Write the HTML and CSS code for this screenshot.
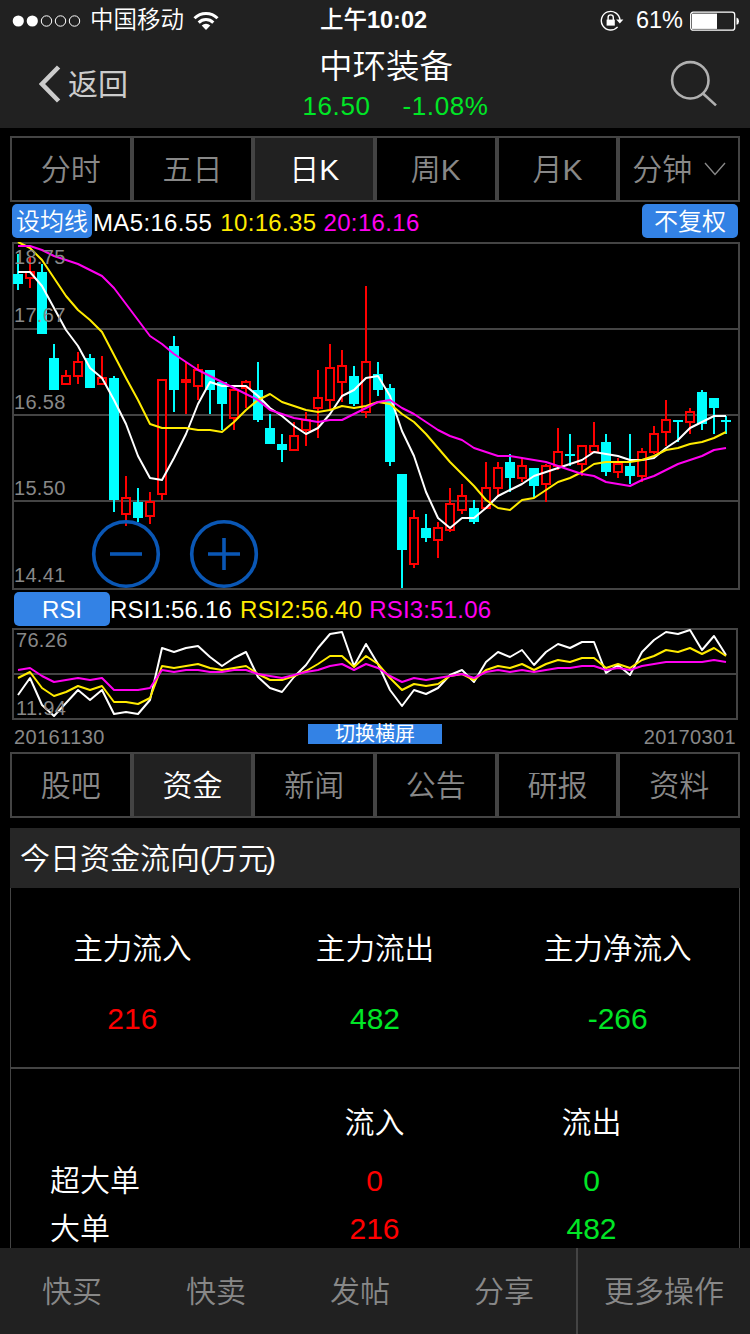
FILE: index.html
```html
<!DOCTYPE html>
<html lang="zh-CN">
<head>
<meta charset="utf-8">
<title>中环装备</title>
<link rel="stylesheet" href="styles.css">
</head>
<body>
<header class="top">
  <div class="status">
    <div class="carrier">
      <svg width="72" height="14" viewBox="0 0 72 14" fill="none" stroke="#fff"><circle cx="6.3" cy="7" r="5.6" fill="#fff" stroke="none"/><circle cx="20.3" cy="7" r="5.6" fill="#fff" stroke="none"/><circle cx="34.5" cy="7" r="5.2"/><circle cx="48.5" cy="7" r="5.2"/><circle cx="62.5" cy="7" r="5.2"/></svg>
      <span class="carrier-name">中国移动</span>
      <svg class="wifi" width="26" height="20" viewBox="0 0 26 20" fill="none" stroke="#fff" stroke-width="3"><path d="M1.5 7.2a16.2 16.2 0 0 1 23 0"/><path d="M5.7 11.6a10.3 10.3 0 0 1 14.6 0"/><path d="M13 19l-4.3-4.4a6.2 6.2 0 0 1 8.6 0z" fill="#fff" stroke="none"/></svg>
    </div>
    <div class="clock">上午<b>10:02</b></div>
    <div class="power">
      <svg width="24" height="22" viewBox="0 0 24 22" fill="none" stroke="#fff" stroke-width="1.4"><path d="M17.6 16.9A9.3 9.3 0 1 1 19.9 10"/><path d="M16.2 9.6h7.2l-3.6 4z" fill="#fff" stroke="none"/><path d="M6.6 9.6h8.2v6H6.6z" fill="#fff" stroke="none"/><path d="M8.1 10V7.5a2.6 2.6 0 0 1 5.2 0V10"/></svg>
      <span class="percent">61%</span>
      <svg width="50" height="20" viewBox="0 0 50 20"><rect x=".7" y="1.2" width="44" height="18" rx="2.5" fill="none" stroke="#fff" stroke-width="1.3"/><rect x="2" y="2.6" width="25" height="15.3" fill="#fff"/><path d="M46.5 6.6q2.5.6 2.5 3.6t-2.5 3.6z" fill="#fff"/></svg>
    </div>
  </div>
  <div class="nav">
    <div class="back">
      <svg width="22" height="38" viewBox="0 0 22 38" fill="none" stroke="#ccc" stroke-width="4.6"><path d="M19.6 2L3 19l16.6 17"/></svg>
      <span>返回</span>
    </div>
    <div class="quote">
      <h1 class="stock">中环装备</h1>
      <div class="price"><span>16.50</span><span>-1.08%</span></div>
    </div>
    <svg class="search" width="48" height="48" viewBox="0 0 48 48" fill="none" stroke="#b0b0b0" stroke-width="2.6"><circle cx="20.3" cy="20.3" r="18.2"/><path d="M33 33.5L46 45.4"/></svg>
  </div>
</header>

<nav class="tabs tabs-period">
  <div class="tab">分时</div><div class="tab">五日</div><div class="tab active">日K</div><div class="tab">周K</div><div class="tab">月K</div>
  <div class="tab">分钟<svg class="caret" width="22" height="14" viewBox="0 0 22 14" fill="none" stroke="#888" stroke-width="1.4"><path d="M1 1l10 11.5L21 1"/></svg></div>
</nav>

<div class="legend legend-ma">
  <span class="pill">设均线</span><span class="white">MA5:16.55</span><span class="yellow">10:16.35</span><span class="magenta">20:16.16</span>
  <span class="pill pill-right">不复权</span>
</div>

<div class="kline">
  <svg id="kline" width="728" height="348" viewBox="12 242 728 348">
    <path class="grid" d="M12 329H740M12 415H740M12 501H740"/>
    <rect class="grid" x="13" y="243" width="726" height="346"/>
    <g id="candles"></g>
    <g id="averages"></g>
    <g class="axis"><text x="14" y="264">18.75</text><text x="14" y="322">17.67</text><text x="14" y="409">16.58</text><text x="14" y="495">15.50</text><text x="14" y="582">14.41</text></g>
    <g class="zoom"><circle cx="126" cy="554" r="32.3"/><path d="M110 554h32"/><circle cx="224" cy="554" r="32.3"/><path d="M208 554h32M224 538v32"/></g>
  </svg>
</div>

<div class="legend legend-rsi">
  <span class="pill">RSI</span><span class="white">RSI1:56.16</span><span class="yellow">RSI2:56.40</span><span class="magenta">RSI3:51.06</span>
</div>

<div class="rsi">
  <svg width="726" height="92" viewBox="12 628 726 92">
    <path class="grid" d="M12 674H738"/>
    <rect class="grid" x="13" y="629" width="724" height="90"/>
    <g id="rsi-lines"></g>
    <g class="axis"><text x="16" y="647">76.26</text><text x="16" y="715">11.94</text></g>
  </svg>
</div>

<div class="dates"><span>20161130</span><span class="rotate">切换横屏</span><span>20170301</span></div>

<nav class="tabs tabs-info">
  <div class="tab">股吧</div><div class="tab active">资金</div><div class="tab">新闻</div><div class="tab">公告</div><div class="tab">研报</div><div class="tab">资料</div>
</nav>

<main class="panel">
  <h2 class="panel-title">今日资金流向<span class="paren">(</span>万元<span class="paren paren-close">)</span></h2>
  <div class="flow">
    <div class="flow-item"><span>主力流入</span><span class="value red">216</span></div>
    <div class="flow-item"><span>主力流出</span><span class="value green">482</span></div>
    <div class="flow-item"><span>主力净流入</span><span class="value green">-266</span></div>
  </div>
  <div class="orders">
    <div class="row row-head"><span></span><span class="cell">流入</span><span class="cell">流出</span></div>
    <div class="row"><span class="name">超大单</span><span class="cell red">0</span><span class="cell green">0</span></div>
    <div class="row"><span class="name">大单</span><span class="cell red">216</span><span class="cell green">482</span></div>
  </div>
</main>

<footer class="actions">
  <div class="action">快买</div><div class="action">快卖</div><div class="action">发帖</div><div class="action">分享</div><div class="action more">更多操作</div>
</footer>
<script src="chart.js"></script>
</body>
</html>
```

FILE: styles.css
```css
* { box-sizing: border-box; }
body {
  margin: 0;
  width: 750px;
  height: 1334px;
  overflow: hidden;
  display: flex;
  flex-direction: column;
  background: #000;
  color: #fff;
  font-family: "Liberation Sans", "Noto Sans CJK SC", sans-serif;
  font-weight: 350;
  font-size: 30px;
  line-height: 1;
  white-space: nowrap;
}
svg { display: block; flex: none; }

.top { height: 128px; flex: none; background: #212121; }
.status {
  height: 40px;
  display: grid;
  grid-template-columns: 1fr auto 1fr;
  align-items: center;
  padding: 1px 10px 0 12px;
  font-size: 24px;
}
.carrier { display: flex; align-items: center; }
.carrier-name { margin-left: 6px; font-size: 23.5px; }
.wifi { margin-left: 9px; }
.clock { font-weight: 500; font-size: 23.5px; padding: 1px 5px 0 0; }
.power { display: flex; align-items: center; justify-content: flex-end; }
.percent { margin: 1px 7px 0 12px; font-size: 23.5px; }
.nav {
  height: 88px;
  display: grid;
  grid-template-columns: 250px 1fr 250px;
}
.back {
  display: flex;
  align-items: center;
  gap: 7px;
  padding-left: 39px;
  color: #ccc;
  font-weight: 400;
}
.back span { padding-top: 2px; }
.quote { display: flex; flex-direction: column; align-items: center; padding: 10px 0 0 22px; }
.stock { margin: 0; font-size: 33.5px; line-height: 34px; font-weight: 350; }
.price {
  display: flex;
  gap: 32px;
  margin: 9px 0 0 19px;
  color: #00e626;
  font-size: 26px;
  letter-spacing: .6px;
}
.search { justify-self: end; margin: 20px 32px 0 0; }

.tabs {
  flex: none;
  height: 66px;
  margin: 8px 10px 0;
  display: grid;
  grid-template-columns: repeat(6, 1fr);
}
.tab {
  display: flex;
  align-items: center;
  justify-content: center;
  padding-top: 2px;
  border: 2px solid #444;
  color: #888;
}
.tab.active { background: #212121; color: #fff; }
.caret { margin: -3px 0 0 12px; }

.legend {
  flex: none;
  display: flex;
  font-size: 24px;
  line-height: 38px;
}
.legend-ma { height: 40px; padding: 2px 12px 0; letter-spacing: .35px; }
.legend-ma .white { margin-left: 1px; }
.legend-rsi { height: 38px; padding: 2px 14px 0; line-height: 36px; letter-spacing: .2px; }
.pill {
  width: 80px;
  height: 34px;
  line-height: 35px;
  border-radius: 5px;
  background: #3382e5;
  text-align: center;
  letter-spacing: 0;
}
.pill-right { width: 96px; margin-left: auto; }
.legend-rsi .pill { width: 96px; }
.white { color: #fff; }
.yellow { color: #ffeb00; margin-left: 8px; }
.magenta { color: #ff00f0; margin-left: 7px; }

.kline, .rsi { flex: none; padding-left: 12px; }
.grid { fill: none; stroke: #444; stroke-width: 2; }
.axis { fill: #888; font-size: 20px; letter-spacing: .3px; }
.zoom { fill: none; stroke: #0a57b5; stroke-width: 3.6; }
.series { fill: none; stroke-width: 2; stroke-linejoin: round; }

.dates {
  flex: none;
  height: 24px;
  margin-top: 2px;
  padding: 2px 14px 0;
  display: grid;
  grid-template-columns: 1fr 134px 1fr;
  font-size: 20px;
  line-height: 26px;
  color: #888;
  letter-spacing: .4px;
}
.dates span:last-child { text-align: right; }
.dates .rotate {
  height: 20px;
  line-height: 21px;
  background: #3382e5;
  color: #fff;
  font-weight: 400;
  text-align: center;
  letter-spacing: 0;
}
.tabs-info { margin-top: 6px; }

.panel { flex: none; height: 420px; margin: 10px 10px 0; overflow: hidden; }
.panel-title {
  margin: 0;
  height: 60px;
  padding-left: 10px;
  background: #262626;
  font-size: 30px;
  font-weight: 350;
  line-height: 62px;
}
.paren { letter-spacing: -2px; }
.paren-close { margin-left: -2px; }
.flow, .orders { border: 0 solid #444; border-width: 0 1px; }
.flow {
  height: 181px;
  border-bottom-width: 2px;
  display: grid;
  grid-template-columns: repeat(3, 1fr);
  padding-top: 46px;
}
.flow-item { display: flex; flex-direction: column; align-items: center; gap: 40px; font-size: 29.6px; }
.value { font-size: 30px; }
.orders { height: 179px; padding: 30px 0 0 39px; }
.row { display: grid; grid-template-columns: 216px 217px 217px; height: 48px; line-height: 48px; }
.row-head { height: 58px; }
.cell { text-align: center; }
.red { color: #ff0000; }
.green { color: #00e626; }

.actions {
  flex: none;
  height: 86px;
  display: grid;
  grid-template-columns: repeat(4, 144px) 1fr;
  background: #212121;
  color: #888;
  line-height: 88px;
  text-align: center;
}
.more { border-left: 2px solid #444; }
```

FILE: chart.js
```js
const SVG = "http://www.w3.org/2000/svg";
const STEP = 12, START = 18;
const CYAN = "#00ffff", RED = "#ff0000";

// direction, high, body top, body bottom, low
const candles = [
  ["d",254,274,284,290],["u",257,271,279,288],["d",264,272,334,334],["d",344,358,390,390],["u",370,375,385,385],
  ["u",352,361,377,384],["d",354,358,388,388],["u",356,377,385,385],["d",376,378,500,512],["u",476,497,515,526],
  ["d",488,502,518,522],["u",492,501,517,524],["u",379,379,495,500],["d",336,346,390,412],["u",362,379,383,414],
  ["u",364,369,387,400],["d",370,370,390,414],["d",382,382,404,430],["u",389,389,419,430],["u",380,381,389,408],
  ["d",362,390,420,422],["d",414,428,444,444],["d",434,444,450,462],["u",422,435,451,451],["u",412,419,431,446],
  ["u",370,397,409,438],["u",344,367,401,410],["u",350,365,383,402],["d",366,376,404,406],["u",286,361,413,418],
  ["d",362,374,390,396],["d",384,388,462,466],["d",474,474,550,588],["u",510,517,565,568],["d",514,528,538,542],
  ["u",522,527,541,558],["u",488,503,531,532],["u",484,495,511,514],["d",500,508,522,524],["u",462,487,509,509],
  ["u",462,467,489,497],["d",454,462,478,492],["u",458,465,479,482],["d",468,468,486,498],["u",464,465,485,502],
  ["u",428,451,467,470],["d",434,454,456,466],["u",445,445,465,476],["u",422,445,453,453],["d",434,442,472,476],
  ["u",458,463,473,478],["d",434,466,476,484],["u",448,451,477,482],["u",426,433,453,454],["u",400,419,433,446],
  ["d",420,420,422,442],["u",408,411,423,434],["d",390,392,424,430],["d",398,398,408,434],["d",416,420,422,434]
];

const averages = {
  "#ffffff": [272,272,286,308,330,346,368,378,400,424,456,478,480,458,434,404,382,386,386,386,396,408,416,426,434,428,414,396,390,378,376,396,431,456,492,518,528,518,518,508,496,490,484,476,472,468,464,460,452,454,456,460,460,458,448,440,428,422,416,416],
  "#ffeb00": [242,248,260,278,296,310,320,332,355,378,400,424,428,428,428,430,430,432,422,410,400,394,402,406,410,412,410,406,408,406,402,404,414,422,434,448,462,474,486,500,508,510,500,498,490,482,478,472,464,462,462,462,460,456,450,448,444,442,438,432],
  "#ff00f0": [246,246,250,256,260,264,270,276,288,304,320,336,344,354,362,370,376,382,388,394,400,410,414,418,420,422,420,420,414,408,402,400,408,414,422,430,436,440,448,452,456,456,458,460,462,466,470,474,476,482,484,486,480,476,470,464,460,456,450,448]
};

const rsi = {
  "#ffffff": [695,678,705,716,703,690,700,690,714,712,714,700,648,652,648,646,657,666,658,652,677,688,692,677,665,648,634,632,666,644,664,690,706,690,694,688,675,670,682,662,652,657,650,665,652,644,648,642,642,673,665,675,652,640,632,634,630,650,636,655],
  "#ffeb00": [678,672,688,696,692,686,690,686,702,702,704,698,666,668,666,664,668,670,668,666,674,680,680,676,671,664,656,656,667,656,664,678,690,684,686,684,676,674,680,670,666,668,664,670,664,660,662,658,658,668,664,668,660,656,650,652,648,654,648,656],
  "#ff00f0": [670,668,676,682,680,678,680,678,690,690,690,688,670,672,670,670,672,672,670,670,674,676,678,675,672,670,666,664,670,664,668,676,682,678,680,678,676,674,678,672,670,672,670,672,670,668,668,666,666,670,668,670,666,664,662,662,662,662,660,662]
};

function add(parent, name, attrs) {
  const el = document.createElementNS(SVG, name);
  for (const key in attrs) el.setAttribute(key, attrs[key]);
  parent.appendChild(el);
}

const candleGroup = document.getElementById("candles");
candles.forEach(([dir, high, top, bottom, low], i) => {
  const x = START + i * STEP;
  if (dir === "d") {
    add(candleGroup, "path", { d: `M${x - 1} ${high}h2V${low}h-2z`, fill: CYAN });
    add(candleGroup, "path", { d: `M${x - 5} ${top}h10V${bottom}h-10z`, fill: CYAN });
  } else {
    add(candleGroup, "path", { d: `M${x} ${high}V${top}M${x} ${bottom}V${low}`, stroke: RED, "stroke-width": 2 });
    add(candleGroup, "rect", { x: x - 4, y: top + 1, width: 8, height: bottom - top - 2, fill: "none", stroke: RED, "stroke-width": 2 });
  }
});

function drawLines(id, series) {
  const group = document.getElementById(id);
  for (const color in series) {
    const points = series[color].map((y, i) => `${START + i * STEP},${y}`).join(" ");
    add(group, "polyline", { points, stroke: color, class: "series" });
  }
}
drawLines("averages", averages);
drawLines("rsi-lines", rsi);
```
